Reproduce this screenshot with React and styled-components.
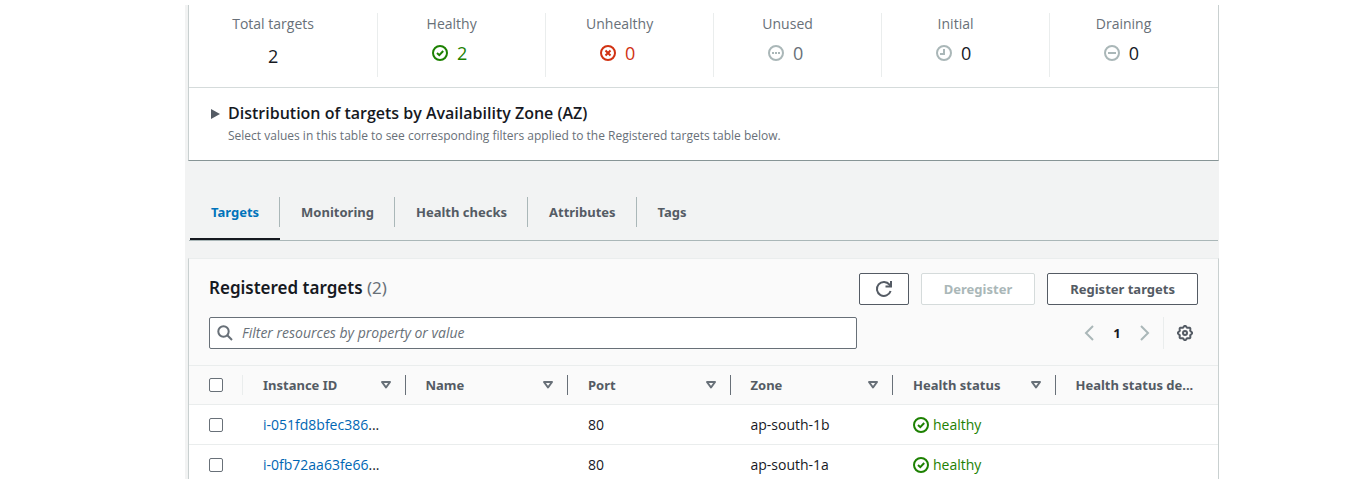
import React from "react";
import styled, { createGlobalStyle, css } from "styled-components";

const GlobalStyle = createGlobalStyle`
  *, *::before, *::after { box-sizing: border-box; }
  body {
    margin: 0;
    background: #fff;
    color: #16191f;
    font: 14px/20px "Open Sans", "Noto Sans", sans-serif;
  }
  button, input { font: inherit; color: inherit; }
  h2, h3, p { margin: 0; }
`;

const strongText = css`
  font-family: "Noto Sans", "Open Sans", sans-serif;
  font-size: 13px;
  font-weight: 700;
`;

const Page = styled.div`
  height: 100vh;
  overflow: hidden;
  padding: 5px 138px 0 185px;
`;

const Content = styled.main`
  min-height: 100%;
  padding-left: 3px;
  background: #f2f3f3;
`;

const Card = styled.section`
  background: #fff;
  border: 1px solid #c9d0d0;
  border-top: ${(p) => (p.$continued ? "0" : "1px solid #eaeded")};
  border-bottom-color: #879596;
`;

const Stats = styled.div`
  display: grid;
  grid-template-columns: calc((100% - 20px) / 6 + 21px) repeat(5, 1fr);
  padding: 8px 0 10px;
  border-bottom: 1px solid #d5dbdb;
`;

const Stat = styled.div`
  height: 64px;
  padding: 1px 20px 0 0;
  border-right: 1px solid #eaeded;
  text-align: center;
  &:last-child { border-right-color: transparent; }
`;

const StatLabel = styled.div`
  color: #687078;
`;

const StatValue = styled.div`
  display: flex;
  justify-content: center;
  align-items: center;
  gap: 9px;
  margin-top: ${(p) => (p.$plain ? "12px" : "9px")};
  padding-right: ${(p) => (p.$plain ? "0" : "4px")};
  font-size: 18px;
  color: ${(p) => p.$color};
`;

const Distribution = styled.div`
  display: flex;
  gap: 8px;
  padding: 15px 20px 14px;
`;

const Disclosure = styled.button`
  display: flex;
  align-items: center;
  width: 11px;
  height: 22px;
  padding: 0 0 0 2px;
  border: 0;
  background: none;
`;

const SectionTitle = styled.h3`
  font-size: 16px;
  font-weight: 600;
  line-height: 20px;
`;

const Description = styled.p`
  margin-top: 3px;
  color: #687078;
  font-size: 12px;
  line-height: 20px;
`;

const Tabs = styled.div`
  display: flex;
  height: 44px;
  margin: 36px 1px 17px;
  padding-left: 1px;
  border-bottom: 1px solid #aab7b8;
`;

const Tab = styled.button`
  display: flex;
  height: 43px;
  padding: 0;
  border: 0;
  border-bottom: 2px solid ${(p) => (p.$active ? "#16191f" : "transparent")};
  background: none;
  color: ${(p) => (p.$active ? "#0073bb" : "#545b64")};
  ${strongText}
  line-height: 30px;
  span {
    height: 30px;
    padding: 0 20px 0 21px;
    border-right: 1px solid #aab7b8;
  }
  &:last-child span { border: 0; }
`;

const TableHead = styled.header`
  padding: 14px 20px 16px;
  background: #fafafa;
  border-bottom: 1px solid #eaeded;
`;

const Bar = styled.div`
  display: flex;
  align-items: center;
  justify-content: space-between;
  height: 32px;
  & + & { margin-top: 12px; }
`;

const Title = styled.h2`
  padding-bottom: 2px;
  font-family: "Noto Sans", "Open Sans", sans-serif;
  font-size: 17px;
  font-weight: 600;
  span { color: #687078; font-weight: 400; }
`;

const Actions = styled.div`
  display: flex;
  gap: 12px;
`;

const Button = styled.button`
  display: flex;
  align-items: center;
  justify-content: center;
  height: 32px;
  min-width: 50px;
  padding: 0 22px;
  border: 1px solid #545b64;
  border-radius: 2px;
  background: #fff;
  color: #545b64;
  ${strongText}
  &:disabled { border-color: #d5dbdb; color: #aab7b8; }
  ${(p) => p.$icon && css`padding: 0;`}
`;

const Search = styled.label`
  display: flex;
  align-items: center;
  gap: 9px;
  flex: 0 1 648px;
  height: 32px;
  padding: 0 7px;
  border: 1px solid #687078;
  border-radius: 2px;
  background: #fff;
  input {
    flex: 1;
    min-width: 0;
    padding: 0;
    border: 0;
    outline: 0;
    background: none;
  }
  input::placeholder { color: #687078; font-style: italic; opacity: 1; }
`;

const Pager = styled.nav`
  display: flex;
  align-items: center;
  height: 32px;
`;

const PageButton = styled.button`
  display: flex;
  align-items: center;
  justify-content: center;
  width: 28px;
  height: 32px;
  padding: 0;
  border: 0;
  background: none;
  ${strongText}
`;

const Settings = styled(PageButton)`
  width: 35px;
  margin-left: 4px;
  padding-left: 8px;
  border-left: 1px solid #eaeded;
`;

const Table = styled.table`
  width: 100%;
  table-layout: fixed;
  border-collapse: collapse;
  th, td { padding: 0; text-align: left; white-space: nowrap; }
  thead tr { height: 38px; background: #fafafa; }
  tbody tr { height: 40px; }
  tr { border-bottom: 1px solid #eaeded; }
  td { padding: 2px 0 0 20px; }
  th:first-child { width: 54px; }
  th:last-child div { border: 0; }
`;

const HeadCell = styled.div`
  display: flex;
  align-items: center;
  justify-content: space-between;
  height: 20px;
  padding: 0 13px 0 20px;
  border-right: 1px solid ${(p) => (p.$light ? "#eaeded" : "#687078")};
  color: #545b64;
  ${strongText}
`;

const Check = styled.input`
  appearance: none;
  display: block;
  width: 14px;
  height: 14px;
  margin: 0;
  border: 1px solid #687078;
  border-radius: 2px;
  background: #fff;
`;

const Link = styled.a`
  color: #0066b3;
  text-decoration: none;
`;

const Status = styled.span`
  display: flex;
  align-items: center;
  gap: 4px;
  color: #1d8102;
`;

const marks = {
  check: <path d="M5 8l2.3 2.2L11.2 6" />,
  cross: <path d="M5.5 5.5l5 5M10.5 5.5l-5 5" />,
  dots: <path d="M4 8h2M7 8h2M10 8h2" />,
  clock: <path d="M8 4v5H4" />,
  minus: <path d="M4 8h8" />,
};

const StatusIcon = ({ kind, color }) => (
  <svg width="16" height="16" viewBox="0 0 16 16" fill="none" stroke={color} strokeWidth="2" aria-hidden="true">
    <circle cx="8" cy="8" r="7" />
    {marks[kind]}
  </svg>
);

const Chevron = ({ d }) => (
  <svg width="16" height="16" viewBox="0 0 16 16" fill="none" stroke="#aab7b8" strokeWidth="2" aria-hidden="true">
    <path d={d} />
  </svg>
);

const gearPath = Array.from({ length: 96 }, (_, i) => {
  const a = (i / 96) * Math.PI * 2;
  const r = 6.4 + 0.7 * Math.cos(8 * a);
  return `${i ? "L" : "M"}${(8 + r * Math.cos(a)).toFixed(2)} ${(8 + r * Math.sin(a)).toFixed(2)}`;
}).join("") + "Z";

const stats = [
  { label: "Total targets", value: 2, color: "#16191f" },
  { label: "Healthy", value: 2, color: "#1d8102", kind: "check", stroke: "#1d8102" },
  { label: "Unhealthy", value: 0, color: "#d13212", kind: "cross", stroke: "#d13212" },
  { label: "Unused", value: 0, color: "#687078", kind: "dots", stroke: "#aab7b8" },
  { label: "Initial", value: 0, color: "#16191f", kind: "clock", stroke: "#aab7b8" },
  { label: "Draining", value: 0, color: "#16191f", kind: "minus", stroke: "#aab7b8" },
];

const tabs = ["Targets", "Monitoring", "Health checks", "Attributes", "Tags"];
const columns = ["Instance ID", "Name", "Port", "Zone", "Health status"];
const rows = [
  { id: "i-051fd8bfec386", port: 80, zone: "ap-south-1b" },
  { id: "i-0fb72aa63fe66", port: 80, zone: "ap-south-1a" },
];

export default function App() {
  return (
    <Page>
      <GlobalStyle />
      <Content>
        <Card $continued>
          <Stats>
            {stats.map((s) => (
              <Stat key={s.label}>
                <StatLabel>{s.label}</StatLabel>
                <StatValue $color={s.color} $plain={!s.kind}>
                  {s.kind && <StatusIcon kind={s.kind} color={s.stroke} />}
                  {s.value}
                </StatValue>
              </Stat>
            ))}
          </Stats>
          <Distribution>
            <Disclosure type="button" aria-label="Expand distribution of targets" aria-expanded="false">
              <svg width="9" height="10" viewBox="0 0 9 10" aria-hidden="true">
                <path d="M0 0L9 5L0 10Z" fill="#545b64" />
              </svg>
            </Disclosure>
            <div>
              <SectionTitle>Distribution of targets by Availability Zone (AZ)</SectionTitle>
              <Description>
                Select values in this table to see corresponding filters applied to the Registered targets table below.
              </Description>
            </div>
          </Distribution>
        </Card>

        <Tabs role="tablist">
          {tabs.map((t, i) => (
            <Tab key={t} type="button" role="tab" aria-selected={i === 0} $active={i === 0}>
              <span>{t}</span>
            </Tab>
          ))}
        </Tabs>

        <Card>
          <TableHead>
            <Bar>
              <Title>Registered targets <span>(2)</span></Title>
              <Actions>
                <Button type="button" $icon aria-label="Refresh">
                  <svg width="18" height="18" viewBox="0 0 18 18" fill="none" stroke="#545b64" strokeWidth="2" aria-hidden="true">
                    <path d="M15.6 11A7 7 0 1 1 14.5 4.7L16 6.5" />
                    <path d="M16 1v5.5h-5.5" />
                  </svg>
                </Button>
                <Button type="button" disabled>Deregister</Button>
                <Button type="button">Register targets</Button>
              </Actions>
            </Bar>
            <Bar>
              <Search>
                <svg width="16" height="16" viewBox="0 0 16 16" fill="none" stroke="#687078" strokeWidth="2" aria-hidden="true">
                  <circle cx="6.5" cy="6.5" r="5.2" />
                  <path d="M10.3 10.3L15 15" />
                </svg>
                <input type="text" aria-label="Filter resources" placeholder="Filter resources by property or value" />
              </Search>
              <Pager aria-label="Pagination">
                <PageButton type="button" aria-label="Previous page"><Chevron d="M12 1L5 8l7 7" /></PageButton>
                <PageButton type="button" aria-current="page">1</PageButton>
                <PageButton type="button" aria-label="Next page"><Chevron d="M4 1l7 7-7 7" /></PageButton>
                <Settings type="button" aria-label="Preferences">
                  <svg width="16" height="16" viewBox="0 0 16 16" fill="none" stroke="#545b64" strokeWidth="2" aria-hidden="true">
                    <path d={gearPath} />
                    <circle cx="8" cy="8" r="2" />
                  </svg>
                </Settings>
              </Pager>
            </Bar>
          </TableHead>
          <Table>
            <thead>
              <tr>
                <th><HeadCell $light><Check type="checkbox" aria-label="Select all targets" /></HeadCell></th>
                {columns.map((c) => (
                  <th key={c}>
                    <HeadCell>
                      {c}
                      <svg width="12" height="10" viewBox="0 0 12 10" fill="none" stroke="#687078" strokeWidth="2" strokeLinejoin="round" aria-hidden="true">
                        <path d="M2 2h8L6 7.5Z" />
                      </svg>
                    </HeadCell>
                  </th>
                ))}
                <th><HeadCell>Health status de...</HeadCell></th>
              </tr>
            </thead>
            <tbody>
              {rows.map((r) => (
                <tr key={r.id}>
                  <td><Check type="checkbox" aria-label={`Select ${r.id}`} /></td>
                  <td><Link href="#instance">{r.id}</Link>...</td>
                  <td />
                  <td>{r.port}</td>
                  <td>{r.zone}</td>
                  <td><Status><StatusIcon kind="check" color="#1d8102" />healthy</Status></td>
                  <td />
                </tr>
              ))}
            </tbody>
          </Table>
        </Card>
      </Content>
    </Page>
  );
}
